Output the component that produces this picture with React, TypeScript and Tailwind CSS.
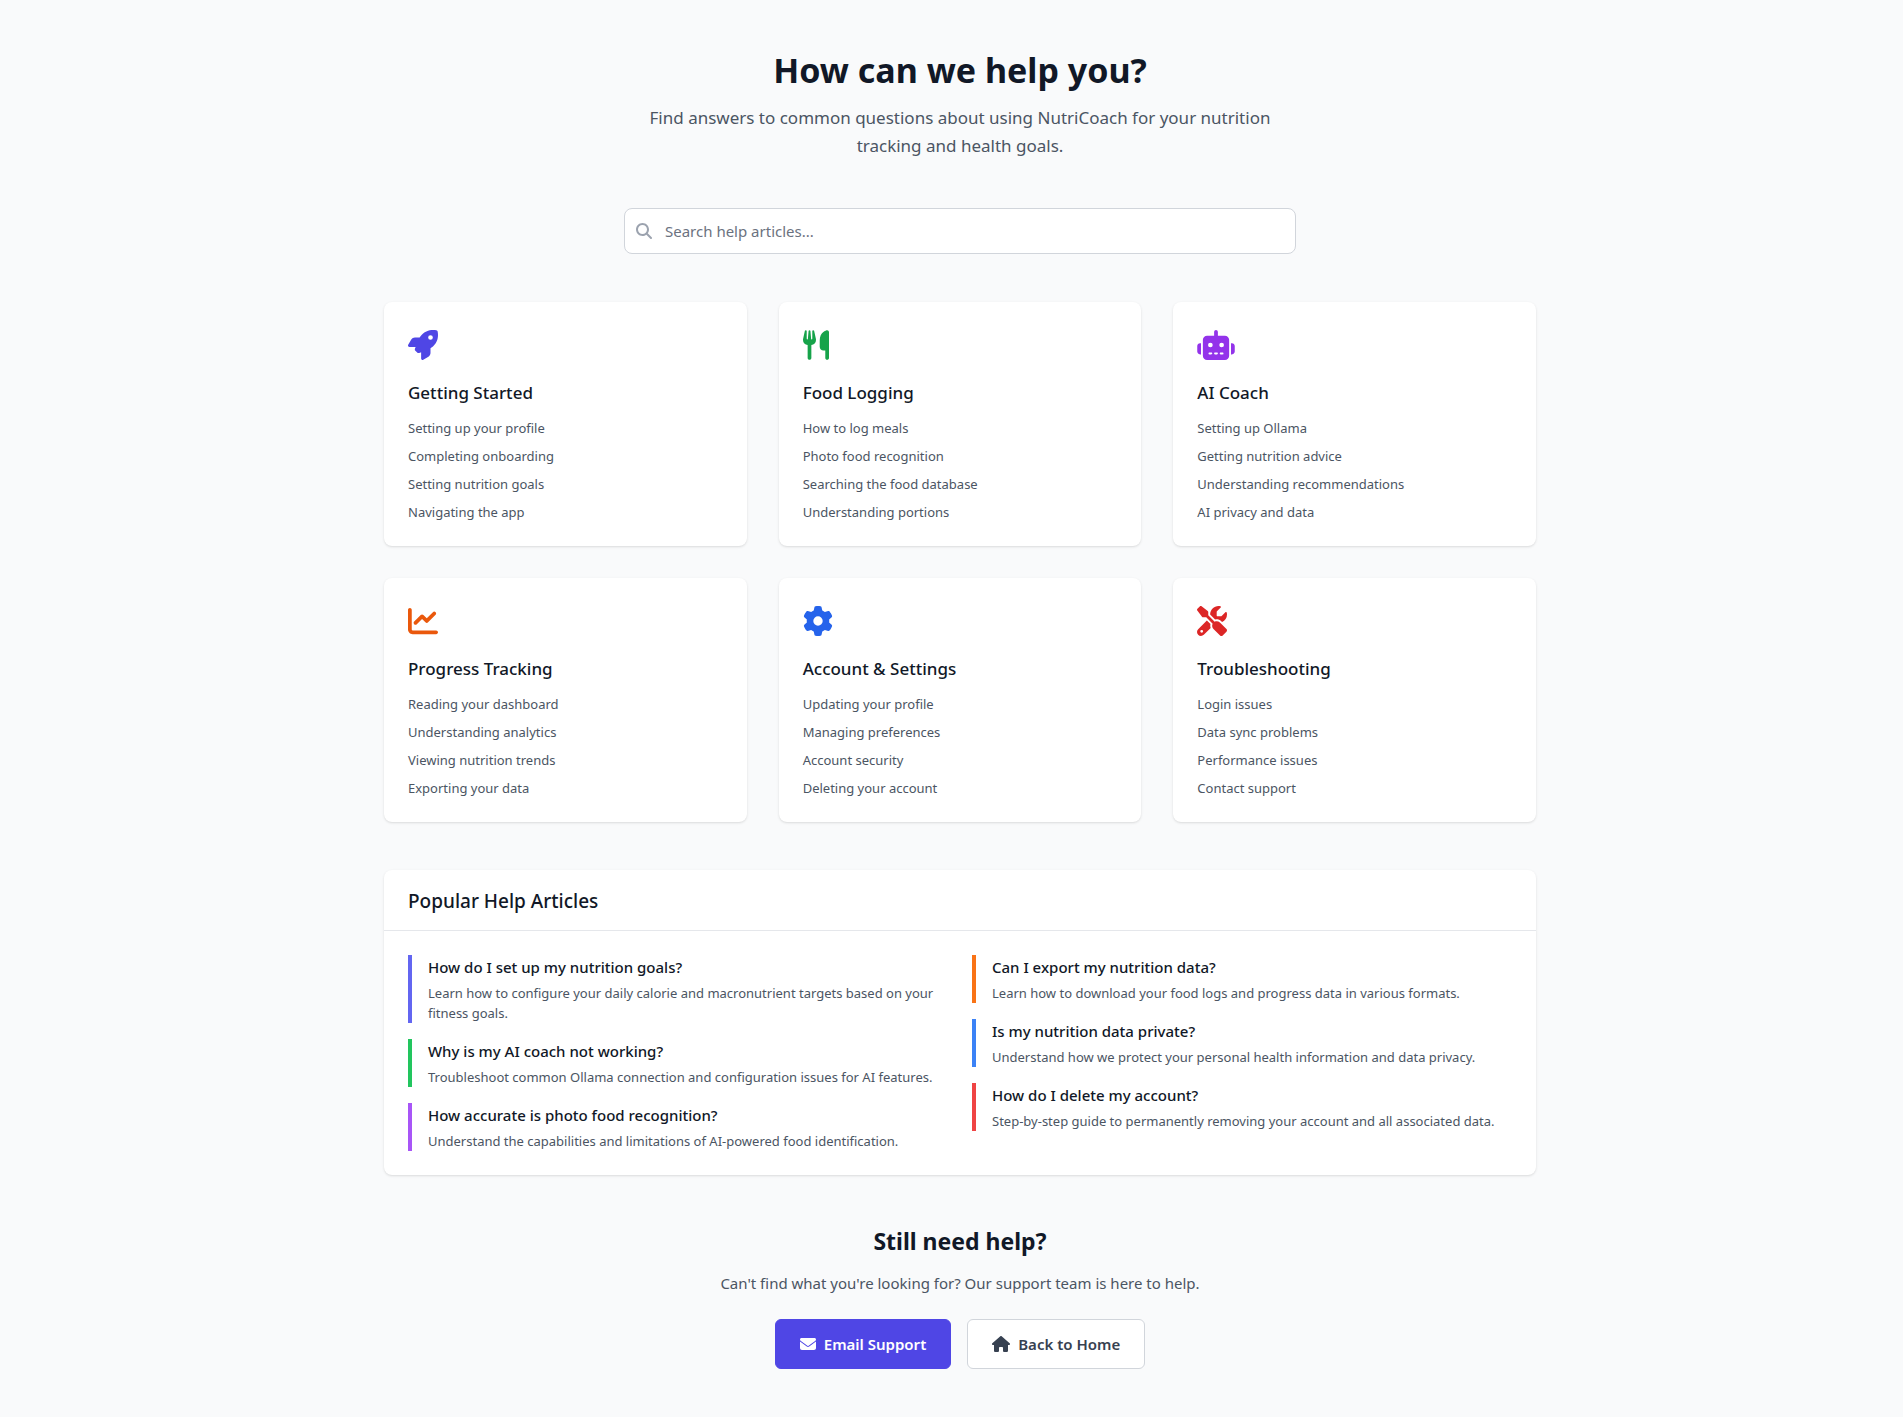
import type { ReactNode } from 'react';
import {
  FaChartLine,
  FaEnvelope,
  FaGear,
  FaHouse,
  FaMagnifyingGlass,
  FaRobot,
  FaRocket,
  FaScrewdriverWrench,
  FaUtensils,
} from 'react-icons/fa6';

type Category = { title: string; icon: ReactNode; links: string[] };
type Article = { title: string; text: string; border: string };

const categories: Category[] = [
  {
    title: 'Getting Started',
    icon: <FaRocket className="size-[30px] text-[#4f46e5]" />,
    links: ['Setting up your profile', 'Completing onboarding', 'Setting nutrition goals', 'Navigating the app'],
  },
  {
    title: 'Food Logging',
    icon: <FaUtensils className="h-[30px] w-[26px] text-[#16a34a]" />,
    links: ['How to log meals', 'Photo food recognition', 'Searching the food database', 'Understanding portions'],
  },
  {
    title: 'AI Coach',
    icon: <FaRobot className="h-[30px] w-[38px] text-[#9333ea]" />,
    links: ['Setting up Ollama', 'Getting nutrition advice', 'Understanding recommendations', 'AI privacy and data'],
  },
  {
    title: 'Progress Tracking',
    icon: <FaChartLine className="size-[30px] text-[#ea580c]" />,
    links: ['Reading your dashboard', 'Understanding analytics', 'Viewing nutrition trends', 'Exporting your data'],
  },
  {
    title: 'Account & Settings',
    icon: <FaGear className="size-[30px] text-[#2563eb]" />,
    links: ['Updating your profile', 'Managing preferences', 'Account security', 'Deleting your account'],
  },
  {
    title: 'Troubleshooting',
    icon: <FaScrewdriverWrench className="size-[30px] text-[#dc2626]" />,
    links: ['Login issues', 'Data sync problems', 'Performance issues', 'Contact support'],
  },
];

const articleColumns: Article[][] = [
  [
    {
      title: 'How do I set up my nutrition goals?',
      text: 'Learn how to configure your daily calorie and macronutrient targets based on your fitness goals.',
      border: 'border-[#6366f1]',
    },
    {
      title: 'Why is my AI coach not working?',
      text: 'Troubleshoot common Ollama connection and configuration issues for AI features.',
      border: 'border-[#22c55e]',
    },
    {
      title: 'How accurate is photo food recognition?',
      text: 'Understand the capabilities and limitations of AI-powered food identification.',
      border: 'border-[#a855f7]',
    },
  ],
  [
    {
      title: 'Can I export my nutrition data?',
      text: 'Learn how to download your food logs and progress data in various formats.',
      border: 'border-[#f97316]',
    },
    {
      title: 'Is my nutrition data private?',
      text: 'Understand how we protect your personal health information and data privacy.',
      border: 'border-[#3b82f6]',
    },
    {
      title: 'How do I delete my account?',
      text: 'Step-by-step guide to permanently removing your account and all associated data.',
      border: 'border-[#ef4444]',
    },
  ],
];

function CategoryCard({ title, icon, links }: Category) {
  return (
    <section className="rounded-lg bg-white p-6 shadow-sm">
      <div className="mb-4 flex h-9 items-center pt-0.5">{icon}</div>
      <h3 className="mb-2.5 text-[17px] leading-[30px] font-medium text-[#111827]">{title}</h3>
      <ul className="space-y-2 text-[13px] leading-5 text-[#4b5563]">
        {links.map((link) => (
          <li key={link}>
            <a href="#" className="hover:text-[#4f46e5]">{link}</a>
          </li>
        ))}
      </ul>
    </section>
  );
}

export default function App() {
  return (
    <div className="min-h-screen bg-[#f9fafb] py-12 pl-[17px] font-['Noto_Sans',sans-serif]">
      <main className="mx-auto max-w-6xl">
        <header className="mb-12 text-center">
          <h1 className="mb-3 text-[34px] leading-11 font-bold text-[#111827]">How can we help you?</h1>
          <p className="mx-auto max-w-2xl px-4 text-[17px] leading-7 text-[#4b5563]">
            Find answers to common questions about using NutriCoach for your nutrition tracking and health goals.
          </p>
        </header>

        <div className="relative mx-auto mb-12 max-w-2xl">
          <FaMagnifyingGlass className="absolute top-1/2 left-3 size-4 -translate-y-1/2 text-[#9ca3af]" />
          <input
            type="text"
            aria-label="Search help articles"
            placeholder="Search help articles..."
            className="block w-full rounded-lg border border-[#d1d5db] bg-white py-3 pr-3 pl-10 text-[15px] leading-5 text-[#111827] placeholder:text-[#6b7280]"
          />
        </div>

        <div className="mb-12 grid grid-cols-1 gap-8 md:grid-cols-2 lg:grid-cols-3">
          {categories.map((category) => (
            <CategoryCard key={category.title} {...category} />
          ))}
        </div>

        <section className="rounded-lg bg-white shadow-sm">
          <div className="border-b border-[#e5e7eb] px-6 pt-4 pb-3.5">
            <h2 className="text-[19px] leading-[30px] font-medium text-[#111827]">Popular Help Articles</h2>
          </div>
          <div className="grid grid-cols-1 gap-6 p-6 md:grid-cols-2">
            {articleColumns.map((articles, index) => (
              <div key={index} className="space-y-4">
                {articles.map((article) => (
                  <article key={article.title} className={`border-l-4 pl-4 ${article.border}`}>
                    <h3 className="text-[15px] leading-6 font-medium text-[#111827]">{article.title}</h3>
                    <p className="mt-1 text-[13px] leading-5 text-[#4b5563]">{article.text}</p>
                  </article>
                ))}
              </div>
            ))}
          </div>
        </section>

        <section className="mt-12 text-center">
          <h2 className="mb-3 text-[23px] leading-9 font-bold text-[#111827]">Still need help?</h2>
          <p className="mb-6 text-[15px] leading-6 text-[#4b5563]">
            Can't find what you're looking for? Our support team is here to help.
          </p>
          <div className="flex justify-center gap-4">
            <a
              href="#"
              className="flex items-center gap-2 rounded-md border border-[#4f46e5] bg-[#4f46e5] px-6 py-3 text-[15px] leading-6 font-semibold text-white"
            >
              <FaEnvelope className="size-4" />
              Email Support
            </a>
            <a
              href="#"
              className="flex items-center gap-2 rounded-md border border-[#d1d5db] bg-white px-6 py-3 text-[15px] leading-6 font-semibold text-[#374151]"
            >
              <FaHouse className="h-4 w-[18px]" />
              Back to Home
            </a>
          </div>
        </section>
      </main>
    </div>
  );
}
